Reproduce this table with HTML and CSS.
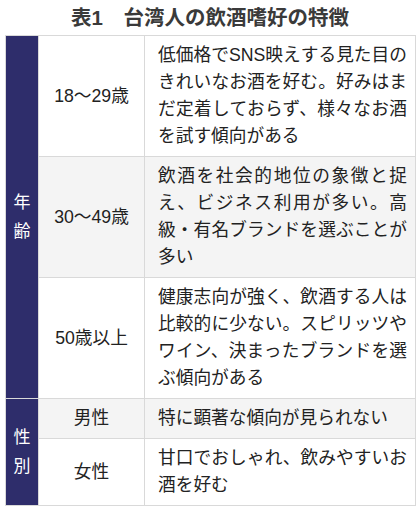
FILE: index.html
```html
<!DOCTYPE html>
<html lang="ja">
<head>
<meta charset="utf-8">
<link rel="stylesheet" href="styles.css">
</head>
<body>
<div class="page">
  <h1 class="title">表1　台湾人の飲酒嗜好の特徴</h1>
  <table class="tbl">
    <colgroup>
      <col class="c1"><col class="c2"><col class="c3">
    </colgroup>
    <tbody>
      <tr>
        <th class="group" rowspan="3">年<br>齢</th>
        <td class="label">18〜29歳</td>
        <td class="desc">低価格でSNS映えする見た目のきれいなお酒を好む。好みはまだ定着しておらず、様々なお酒を試す傾向がある</td>
      </tr>
      <tr class="alt">
        <td class="label">30〜49歳</td>
        <td class="desc">飲酒を社会的地位の象徴と捉え、ビジネス利用が多い。高級・有名ブランドを選ぶことが多い</td>
      </tr>
      <tr>
        <td class="label">50歳以上</td>
        <td class="desc">健康志向が強く、飲酒する人は比較的に少ない。スピリッツやワイン、決まったブランドを選ぶ傾向がある</td>
      </tr>
      <tr class="alt">
        <th class="group" rowspan="2">性<br>別</th>
        <td class="label">男性</td>
        <td class="desc">特に顕著な傾向が見られない</td>
      </tr>
      <tr>
        <td class="label">女性</td>
        <td class="desc">甘口でおしゃれ、飲みやすいお酒を好む</td>
      </tr>
    </tbody>
  </table>
</div>
</body>
</html>
```

FILE: styles.css
```css
html, body {
  margin: 0;
  padding: 0;
  background: #ffffff;
}
.page {
  padding: 0 5px;
  font-family: "Liberation Sans", "Noto Sans CJK JP", sans-serif;
  color: #222222;
}
.title {
  margin: 0;
  height: 35px;
  line-height: 36px;
  font-size: 20.5px;
  font-weight: 700;
  color: #3a3a3a;
  text-align: center;
}
.tbl {
  width: 410px;
  border-collapse: collapse;
  table-layout: fixed;
  font-size: 17.7px;
}
.c1 { width: 33px; }
.c2 { width: 106px; }
.c3 { width: 271px; }
.tbl th, .tbl td {
  border: 1px solid #d9d9d9;
  line-height: 27px;
}
.tbl .group {
  background: #2e2d6b;
  color: #ffffff;
  font-weight: 400;
  font-size: 17px;
  line-height: 29px;
  text-align: center;
  vertical-align: middle;
  padding: 0;
}
.label {
  text-align: center;
  vertical-align: middle;
  padding: 6px 4px;
}
.desc {
  text-align: justify;
  vertical-align: middle;
  padding: 6px 8px 6px 13px;
}
.alt td {
  background: #f4f4f4;
}
```
